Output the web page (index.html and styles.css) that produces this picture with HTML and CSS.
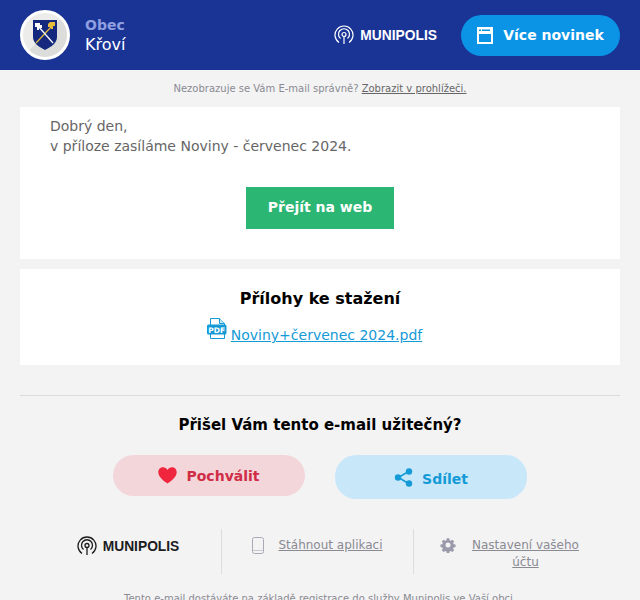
FILE: index.html
```html
<!DOCTYPE html>
<html lang="cs">
  <head>
    <meta charset="utf-8">
    <title>Obec Křoví</title>
    <link rel="stylesheet" href="styles.css">
  </head>
  <body>
    <div class="header">
      <div class="crest">
        <svg width="24" height="30" viewBox="0 0 24 30">
          <path d="M0 0h24v17c0 6-6 10-12 13C6 27 0 23 0 17z" fill="#14287e"/>
          <path d="M3 23L19 6" stroke="#e0b93a" stroke-width="1.200"/>
          <path d="M20 23L5 6" stroke="#fff" stroke-width="1.200"/>
          <path d="M2 3h5v2h2v3H6v2H4V7H2z" fill="#fff"/>
          <path d="M15 4l2-2h5v4h-2v3h-2V7h-3z" fill="#e8bd3c"/>
        </svg>
      </div>
      <div class="town">
        <div class="town_small">Obec</div>
        <div class="town_name">Křoví</div>
      </div>
      <div class="logo logo_white">
        <svg width="20" height="20" viewBox="0 0 20 20" fill="none" stroke="#fff" stroke-width="1.200">
          <path d="M5 17.500a9 9 0 1 1 10 0"/>
          <path d="M6.500 13.500a5.500 5.500 0 1 1 7 0"/>
          <circle cx="10" cy="9.500" r="2"/>
          <path d="M10 11.500V19"/>
        </svg>
        <span>MUNIPOLIS</span>
      </div>
      <a class="more_btn">
        <svg width="16" height="17" viewBox="0 0 16 17">
          <path d="M0 0h16v17H0z" fill="#fff"/>
          <path d="M2 7h12v8H2z" fill="#0b94e6"/>
          <path d="M2 2.500h2v1.500H2zM5 2.500h8v1.500H5z" fill="#0b94e6"/>
        </svg>
        Více novinek
      </a>
    </div>

    <p class="top_note">Nezobrazuje se Vám E-mail správně? <a>Zobrazit v prohlížeči.</a></p>

    <div class="card message">
      <p>Dobrý den,<br>v příloze zasíláme Noviny - červenec 2024.</p>
      <div class="center">
        <a class="web_btn">Přejít na web</a>
      </div>
    </div>

    <div class="card files">
      <h3>Přílohy ke stažení</h3>
      <div class="file_row">
        <svg class="pdf" width="20" height="22" viewBox="0 0 20 22">
          <path d="M3.500.5h9l5 5v15h-14z" fill="#fff" stroke="#159ad8"/>
          <path d="M12.500.5v5h5" fill="#bfe4f5" stroke="#159ad8"/>
          <rect x="0" y="6.500" width="19.500" height="10" rx="1.500" fill="#159ad8"/>
          <text x="9.700" y="14.500" class="pdf_text">PDF</text>
        </svg>
        <a>Noviny+červenec 2024.pdf</a>
      </div>
    </div>

    <div class="footer">
      <h3>Přišel Vám tento e-mail užitečný?</h3>
      <div class="actions">
        <a class="pill pill_red">
          <svg width="19" height="17" viewBox="0 0 19 17">
            <path d="M9.500 16.500C6 14 .3 10 .3 5.200.3 2.300 2.500.3 5 .3c1.900 0 3.500 1 4.500 2.600C10.500 1.300 12.100.3 14 .3c2.500 0 4.700 2 4.700 4.900 0 4.800-5.700 8.800-9.200 11.300z" fill="#f0263f"/>
          </svg>
          Pochválit
        </a>
        <a class="pill pill_blue">
          <svg width="19" height="19" viewBox="0 0 18 19" fill="#159ad8">
            <path d="M14 3.500L4 9.500l10 6" fill="none" stroke="#159ad8" stroke-width="1.600"/>
            <circle cx="14.500" cy="3.500" r="3.200"/>
            <circle cx="3.500" cy="9.500" r="3.200"/>
            <circle cx="14.500" cy="15.500" r="3.200"/>
          </svg>
          <span>Sdílet</span>
        </a>
      </div>
      <div class="links">
        <div class="link_cell logo_cell">
          <div class="logo logo_dark">
            <svg width="20" height="20" viewBox="0 0 20 20" fill="none" stroke="#1c1c1c" stroke-width="1.300">
              <path d="M5 17.500a9 9 0 1 1 10 0"/>
              <path d="M6.500 13.500a5.500 5.500 0 1 1 7 0"/>
              <circle cx="10" cy="9.500" r="2"/>
              <path d="M10 11.500V19"/>
            </svg>
            <span>MUNIPOLIS</span>
          </div>
        </div>
        <div class="link_cell">
          <svg class="phone" width="12" height="17" viewBox="0 0 12 17">
            <rect x=".5" y=".5" width="11" height="16" rx="2" fill="#f3f3f4" stroke="#a9a9b6"/>
            <path d="M1 13.500h10" stroke="#c9c9d2"/>
          </svg>
          <a>Stáhnout aplikaci</a>
        </div>
        <div class="link_cell">
          <svg class="gear" width="16" height="16" viewBox="0 0 16 16">
            <path d="M6.500 0h3l.4 2.200 1.400.6L13.200 1.600l2.100 2.100-1.200 1.900.6 1.400 2.300.5v3l-2.300.4-.6 1.400 1.200 1.900-2.100 2.100-1.900-1.200-1.400.6-.4 2.200h-3l-.4-2.200-1.400-.6-1.900 1.200L.6 14.200l1.200-1.900-.6-1.400L-1 10.500v-3l2.200-.5.6-1.400L.6 3.700l2.100-2.100 1.900 1.200 1.400-.6z" fill="#9a9aaa" transform="translate(1.300 1.300) scale(.84)"/>
            <circle cx="8" cy="8" r="2.500" fill="#f3f3f4"/>
          </svg>
          <a class="wide">Nastavení vašeho účtu</a>
        </div>
      </div>
      <p class="bottom_note">Tento e-mail dostáváte na základě registrace do služby Munipolis ve Vaší obci.</p>
    </div>
  </body>
</html>
```

FILE: styles.css
```css
* {
  padding: 0;
  margin: 0;
  box-sizing: border-box;
  font-family: "DejaVu Sans", Verdana, sans-serif;
}

html,
body {
  height: 600px;
  overflow: hidden;
}

body {
  background: #f3f3f4;
  color: #666;
}

a {
  text-decoration: underline;
}

.header {
  height: 70px;
  background: #1a3496;
  padding: 0 20px;
  display: flex;
  align-items: center;
}

.crest {
  width: 50px;
  height: 50px;
  border-radius: 50%;
  background: linear-gradient(135deg, #ececea 50%, #dcdcda 50%);
  border: 3px solid #fff;
  display: flex;
  justify-content: center;
  align-items: center;
  margin-right: 15px;
}

.town_small {
  font-size: 14px;
  line-height: 19px;
  font-weight: 700;
  color: #8f9fe0;
}

.town_name {
  font-size: 16px;
  line-height: 20px;
  color: #fff;
}

.logo {
  display: flex;
  align-items: center;
  gap: 6px;
}

.logo span {
  font-family: "Liberation Sans", Arial, sans-serif;
  font-size: 13.800px;
  font-weight: 700;
}

.logo_white {
  margin-left: auto;
  margin-right: 24px;
  color: #fff;
}

.logo_dark {
  color: #1c1c1c;
  margin-top: -1px;
}

.more_btn {
  width: 159px;
  height: 41px;
  border-radius: 21px;
  background: #0b94e6;
  color: #fff;
  font-size: 14px;
  font-weight: 700;
  text-decoration: none;
  display: flex;
  justify-content: center;
  align-items: center;
  gap: 10px;
}

.top_note {
  height: 37px;
  font-size: 10px;
  line-height: 37px;
  text-align: center;
  color: #8a8a92;
}

.top_note a {
  color: #666;
}

.card {
  background: #fff;
  margin: 0 20px;
}

.message {
  height: 152px;
  padding: 9px 30px 0;
  font-size: 14px;
  line-height: 20px;
}

.center {
  display: flex;
  justify-content: center;
  margin-top: 31px;
}

.web_btn {
  width: 148px;
  height: 42px;
  background: #2bb673;
  color: #fff;
  font-weight: 700;
  font-size: 14px;
  line-height: 41px;
  text-align: center;
  text-decoration: none;
}

.files {
  height: 96px;
  margin-top: 10px;
  padding-top: 19px;
  text-align: center;
}

.files h3 {
  font-size: 16px;
  line-height: 21px;
  color: #000;
}

.file_row {
  margin-top: 9px;
  padding-right: 11px;
  display: flex;
  justify-content: center;
  align-items: flex-start;
  gap: 4px;
  font-size: 14px;
}

.file_row a {
  color: #159ad8;
  margin-top: 9px;
}

.pdf_text {
  font-size: 7.500px;
  font-weight: 700;
  fill: #fff;
  text-anchor: middle;
}

.footer {
  margin: 30px 20px 0;
  border-top: 1px solid #dcdcdc;
  text-align: center;
}

.footer h3 {
  font-size: 15px;
  line-height: 20px;
  margin-top: 19px;
  color: #000;
}

.actions {
  display: flex;
  justify-content: center;
  gap: 30px;
  margin-top: 20px;
}

.pill {
  width: 192px;
  height: 41px;
  border-radius: 21px;
  font-size: 14px;
  font-weight: 700;
  text-decoration: none;
  display: flex;
  justify-content: center;
  align-items: center;
  gap: 9px;
}

.pill_red {
  background: #f2d6da;
  color: #d02c45;
}

.pill_blue {
  height: 44px;
  background: #c8e8fa;
  color: #159ad8;
}

.pill_blue span {
  margin-top: 4px;
}

.links {
  display: flex;
  justify-content: center;
  margin-top: 30px;
  padding-right: 6px;
}

.link_cell {
  width: 192px;
  height: 45px;
  display: flex;
  justify-content: center;
  align-items: flex-start;
  gap: 14px;
  font-size: 12px;
  line-height: 17px;
  color: #8a8a92;
  padding-top: 8px;
}

.logo_cell {
  padding-left: 6px;
}

.link_cell + .link_cell {
  border-left: 1px solid #dcdcdc;
}

.gear {
  margin-left: 2px;
}

.link_cell a {
  color: #8a8a92;
}

.wide {
  width: 112px;
}

.bottom_note {
  margin-top: 19px;
  font-size: 10px;
  color: #8a8a92;
}
```
